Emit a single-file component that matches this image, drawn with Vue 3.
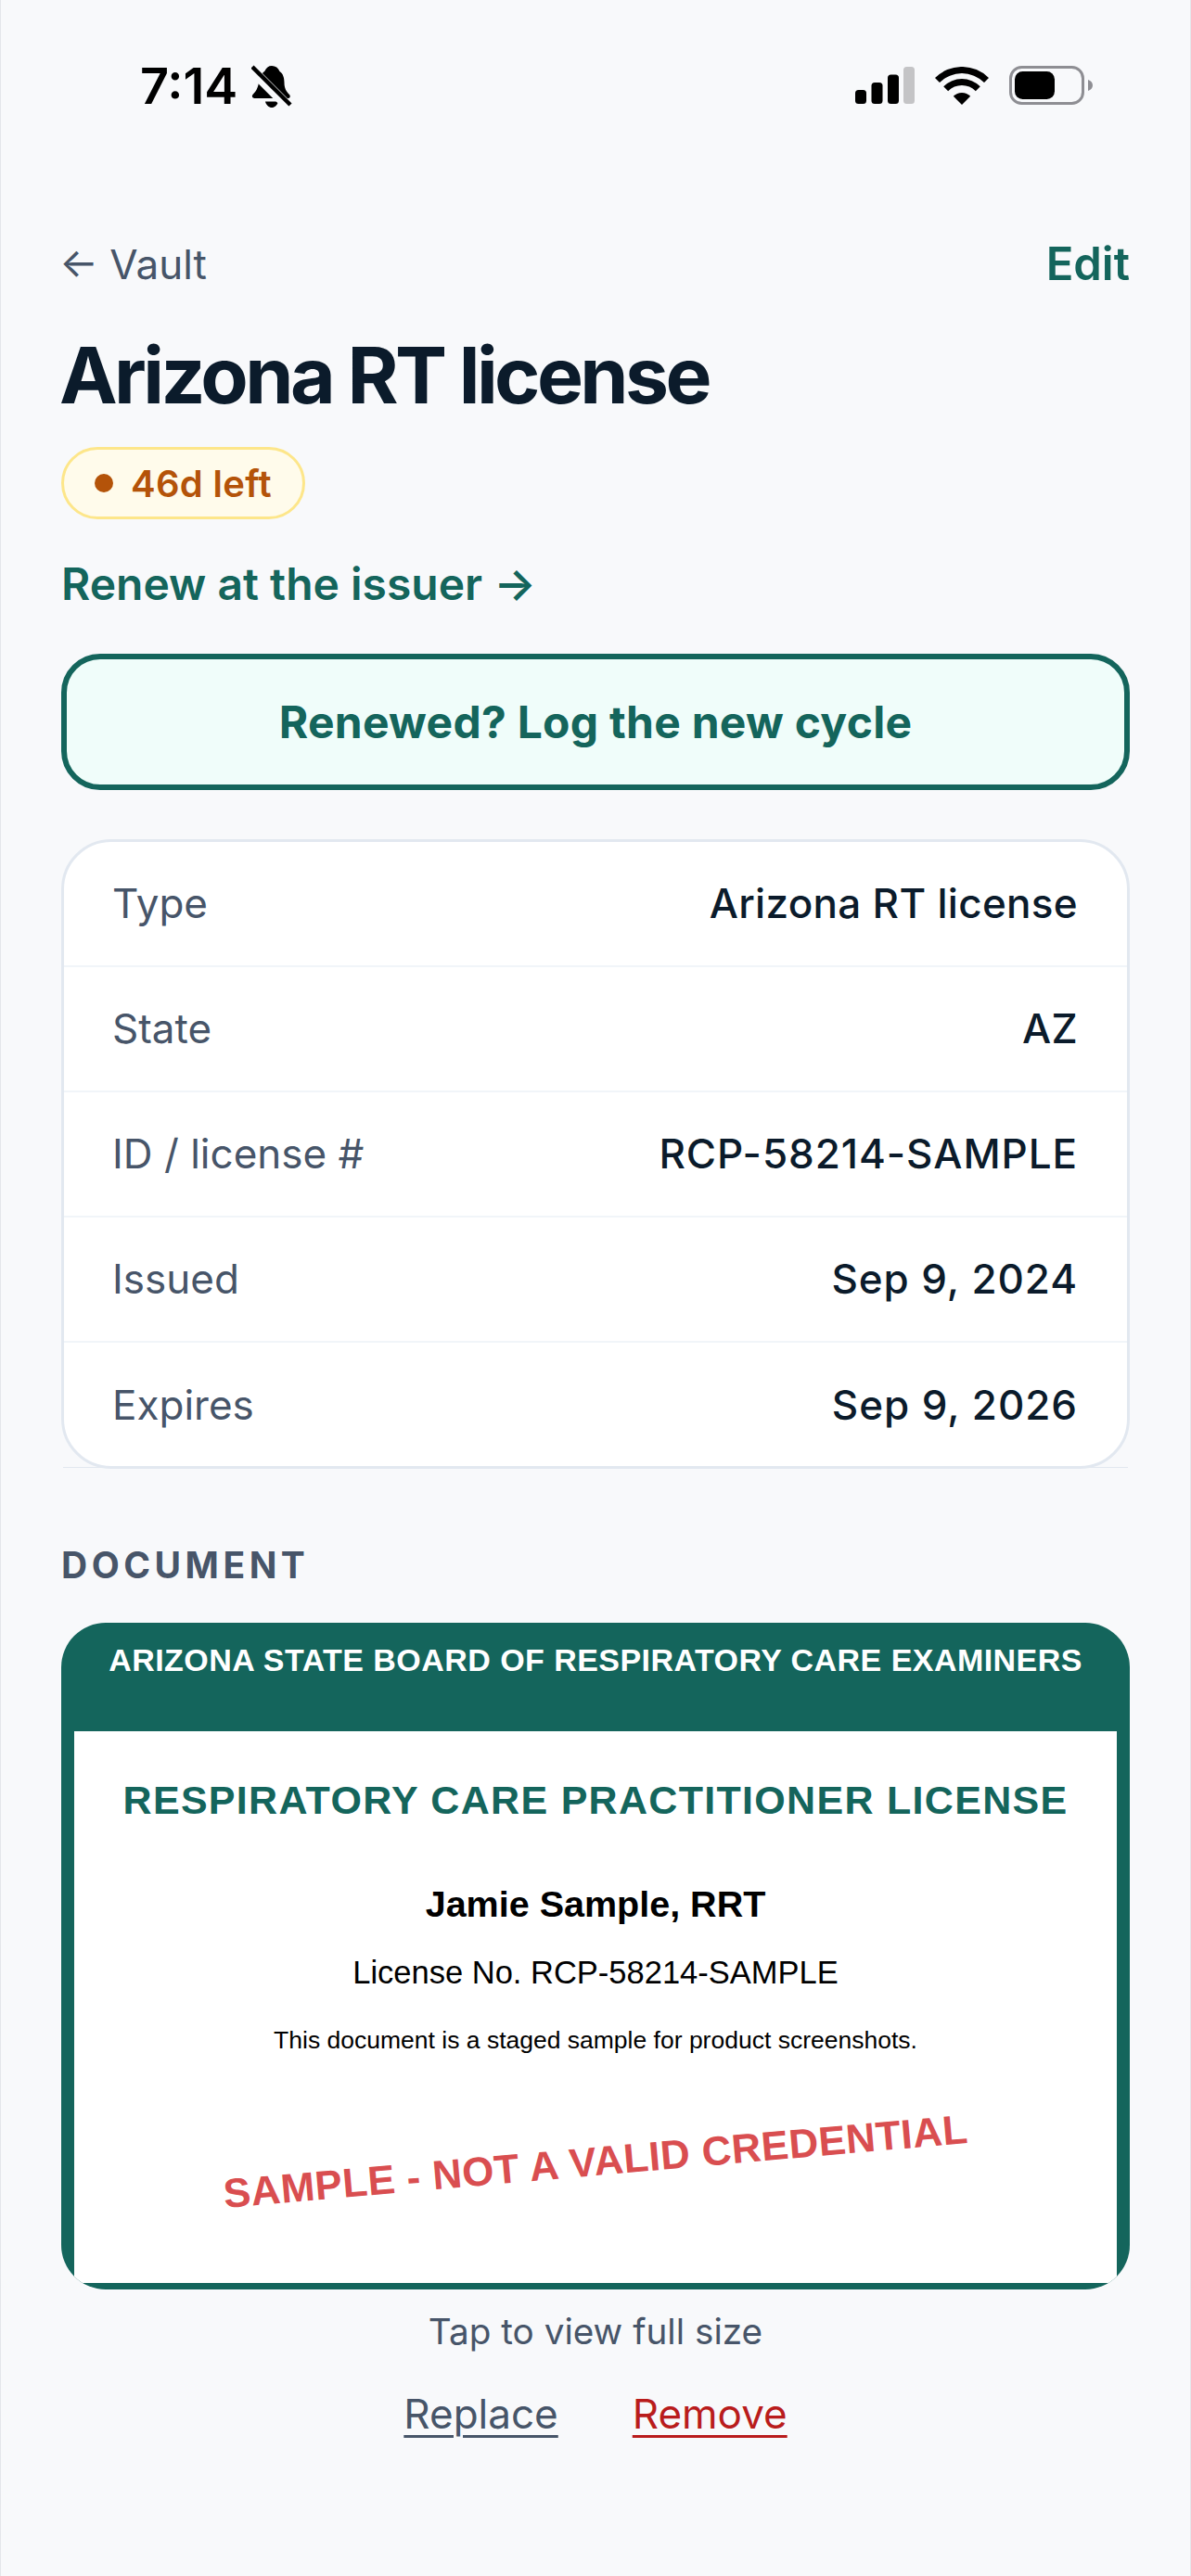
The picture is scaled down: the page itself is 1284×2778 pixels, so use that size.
<script setup>
const rows = [
  { label: 'Type', value: 'Arizona RT license' },
  { label: 'State', value: 'AZ' },
  { label: 'ID / license #', value: 'RCP-58214-SAMPLE', num: true },
  { label: 'Issued', value: 'Sep 9, 2024', num: true },
  { label: 'Expires', value: 'Sep 9, 2026', num: true },
]
</script>

<template>
  <div class="app">
    <div class="status-bar">
      <div class="status-left">
        <span class="time">7:14</span>
        <svg class="bell" width="44" height="46" viewBox="0 0 44 46">
          <path d="M22 1c4 0 7 2 8.5 6C34 9 35.5 14 35.5 19c0 6 2 9.500 5.500 13 1.500 1.600.8 4-1.500 4H3.500c-2.600 0-3.400-2.600-1.800-4.200C5 28.500 7 25 8 19c.8-6 3-10 6.500-12.500C16 3 18.500 1 22 1z" fill="#000" />
          <path d="M15 39.500h14c-1 4-4 6.500-7 6.500s-6-2.500-7-6.500z" fill="#000" />
          <path d="M-1 4L38 43" stroke="#f8f9fb" stroke-width="11" />
          <path d="M1 2L42 43" stroke="#000" stroke-width="4.500" />
        </svg>
      </div>
      <div class="status-right">
        <svg width="64" height="40" viewBox="0 0 64 40">
          <rect x="0" y="25" width="12" height="15" rx="3.500" fill="#000" />
          <rect x="17.500" y="17" width="12" height="23" rx="3.500" fill="#000" />
          <rect x="35" y="8.500" width="12" height="31.500" rx="3.500" fill="#000" />
          <rect x="52" y="0" width="12" height="40" rx="3.500" fill="#c4c4c6" />
        </svg>
        <svg width="58" height="41" viewBox="-1 0 58 41">
          <path d="M-1 12A41 41 0 0 1 57 12L52 17A34 34 0 0 0 4 17Z" fill="#000" />
          <path d="M8.200 21.200A28 28 0 0 1 47.800 21.200L42.850 26.150A21 21 0 0 0 13.150 26.150Z" fill="#000" />
          <path d="M18.800 31.800A13 13 0 0 1 37.200 31.800L28 41Z" fill="#000" />
        </svg>
        <svg width="90" height="42" viewBox="0 0 90 42">
          <rect x="1.500" y="1.500" width="78" height="39" rx="12" fill="none" stroke="#8e8e93" stroke-width="3" />
          <rect x="6" y="6" width="43" height="30" rx="8.500" fill="#000" />
          <path d="M85 15c3 1 5 3 5 6s-2 5-5 6z" fill="#8e8e93" />
        </svg>
      </div>
    </div>

    <main class="content">
      <div class="nav-row">
        <span class="back">← Vault</span>
        <span class="edit">Edit</span>
      </div>
      <h1 class="title">Arizona RT license</h1>
      <div class="pill"><span class="dot"></span>46d left</div>
      <div class="renew-link">Renew at the issuer →</div>
      <button class="log-btn">Renewed? Log the new cycle</button>

      <div class="details">
        <div v-for="row in rows" :key="row.label" class="row">
          <span class="label">{{ row.label }}</span>
          <span class="value" :class="{ num: row.num }">{{ row.value }}</span>
        </div>
      </div>

      <div class="section-title">DOCUMENT</div>
      <div class="doc">
        <div class="doc-head">ARIZONA STATE BOARD OF RESPIRATORY CARE EXAMINERS</div>
        <div class="doc-body">
          <div class="doc-title">RESPIRATORY CARE PRACTITIONER LICENSE</div>
          <div class="doc-name">Jamie Sample, RRT</div>
          <div class="doc-license">License No. RCP-58214-SAMPLE</div>
          <div class="doc-note">This document is a staged sample for product screenshots.</div>
          <div class="doc-stamp">SAMPLE - NOT A VALID CREDENTIAL</div>
        </div>
      </div>
      <div class="tap">Tap to view full size</div>
      <div class="actions">
        <a class="replace">Replace</a>
        <a class="remove">Remove</a>
      </div>
    </main>
  </div>
</template>

<style>
html,
body {
  margin: 0;
  background: #f8f9fb;
}
</style>

<style scoped>
.app {
  box-sizing: border-box;
  height: 2778px;
  overflow: hidden;
  background: #f8f9fb;
  border-left: 1px solid #e4e6ea;
  border-right: 1px solid #e4e6ea;
  font-family: Inter, "Liberation Sans", sans-serif;
  color: #0b1b2b;
}
.status-bar {
  height: 140px;
  box-sizing: border-box;
  padding: 70px 0 0 150px;
  display: flex;
  justify-content: space-between;
  align-items: flex-start;
}
.status-left {
  display: flex;
  align-items: center;
  gap: 15px;
  height: 46px;
}
.time {
  font-size: 54px;
  font-weight: 600;
  line-height: 46px;
  color: #000;
}
.status-right {
  display: flex;
  align-items: center;
  gap: 22px;
  padding-right: 105px;
  height: 44px;
}
.content {
  padding: 115px 65px 0;
}
.nav-row {
  display: flex;
  justify-content: space-between;
  line-height: 60px;
}
.back {
  margin-left: -2px;
  font-size: 44px;
  color: #475569;
}
.edit {
  font-size: 49px;
  font-weight: 600;
  color: #14655c;
}
.title {
  margin: 40px 0 0 -2px;
  font-size: 84px;
  line-height: 100px;
  font-weight: 700;
  letter-spacing: -3.600px;
  color: #0b1b2b;
}
.pill {
  box-sizing: border-box;
  margin-top: 27px;
  width: 263px;
  height: 78px;
  border: 3px solid #fde68a;
  border-radius: 39px;
  background: #fffbeb;
  color: #b45309;
  font-size: 40px;
  font-weight: 600;
  letter-spacing: 0.3px;
  display: flex;
  align-items: center;
  padding-left: 33px;
  gap: 19px;
}
.dot {
  width: 20px;
  height: 20px;
  border-radius: 50%;
  background: #b45309;
}
.renew-link {
  margin-top: 40px;
  font-size: 48px;
  line-height: 60px;
  font-weight: 600;
  color: #14655c;
}
.log-btn {
  display: block;
  box-sizing: border-box;
  width: 100%;
  height: 147px;
  margin-top: 45px;
  border: 6px solid #14655c;
  border-radius: 42px;
  background: #f0fdfa;
  color: #14655c;
  font-family: inherit;
  font-size: 48px;
  font-weight: 700;
  letter-spacing: 0.27px;
}
.details {
  position: relative;
  box-sizing: border-box;
  height: 679px;
  margin-top: 53px;
  border: 3px solid #e2e8f0;
  border-radius: 54px;
  background: #fff;
}
/* hairline of the last row that pokes out past the rounded corners */
.details::after {
  content: '';
  position: absolute;
  left: -1px;
  right: -1px;
  bottom: -2px;
  height: 1px;
  background: #e2e8f0;
}
.row {
  box-sizing: border-box;
  height: 135px;
  padding: 0 53px 2px 52px;
  display: flex;
  justify-content: space-between;
  align-items: center;
  border-bottom: 2px solid #f1f5f9;
  font-size: 44px;
}
.row:last-child {
  border-bottom: none;
}
.label {
  color: #475569;
}
.value {
  font-weight: 500;
  letter-spacing: 0.3px;
  color: #0b1b2b;
}
.value.num {
  letter-spacing: 0.95px;
}
.section-title {
  margin-top: 79px;
  font-size: 39px;
  line-height: 50px;
  font-weight: 700;
  letter-spacing: 4.500px;
  color: #475569;
}
.doc {
  margin-top: 37px;
  height: 719px;
  border-radius: 48px;
  overflow: hidden;
  background: #14655c;
  font-family: "Liberation Sans", Arial, sans-serif;
  text-align: center;
}
.doc-head {
  height: 117px;
  box-sizing: border-box;
  padding-top: 20px;
  color: #fff;
  font-size: 34px;
  line-height: 40px;
  font-weight: 700;
  letter-spacing: 0.45px;
}
.doc-body {
  height: 595px;
  box-sizing: border-box;
  margin: 0 14px;
  padding-top: 49px;
  background: #fff;
  color: #000;
}
.doc-title {
  font-size: 43px;
  line-height: 50px;
  font-weight: 700;
  letter-spacing: 1.300px;
  color: #14655c;
}
.doc-name {
  margin-top: 62px;
  font-size: 39.500px;
  line-height: 50px;
  font-weight: 700;
}
.doc-license {
  margin-top: 29px;
  font-size: 34.500px;
  line-height: 40px;
}
.doc-note {
  margin-top: 35px;
  font-size: 26.500px;
  line-height: 36px;
}
.doc-stamp {
  margin-top: 88px;
  font-size: 44px;
  line-height: 50px;
  font-weight: 700;
  letter-spacing: 0.4px;
  color: #d94e50;
  transform: rotate(-5deg);
}
.tap {
  margin-top: 20px;
  text-align: center;
  font-size: 38.700px;
  line-height: 50px;
  color: #475569;
}
.actions {
  margin-top: 34px;
  display: flex;
  justify-content: center;
  gap: 80px;
  font-size: 44px;
  line-height: 60px;
}
.actions a {
  text-decoration: underline;
  text-decoration-thickness: 3px;
  text-underline-offset: 7px;
}
.replace {
  color: #475569;
}
.remove {
  color: #b91c1c;
}
</style>
